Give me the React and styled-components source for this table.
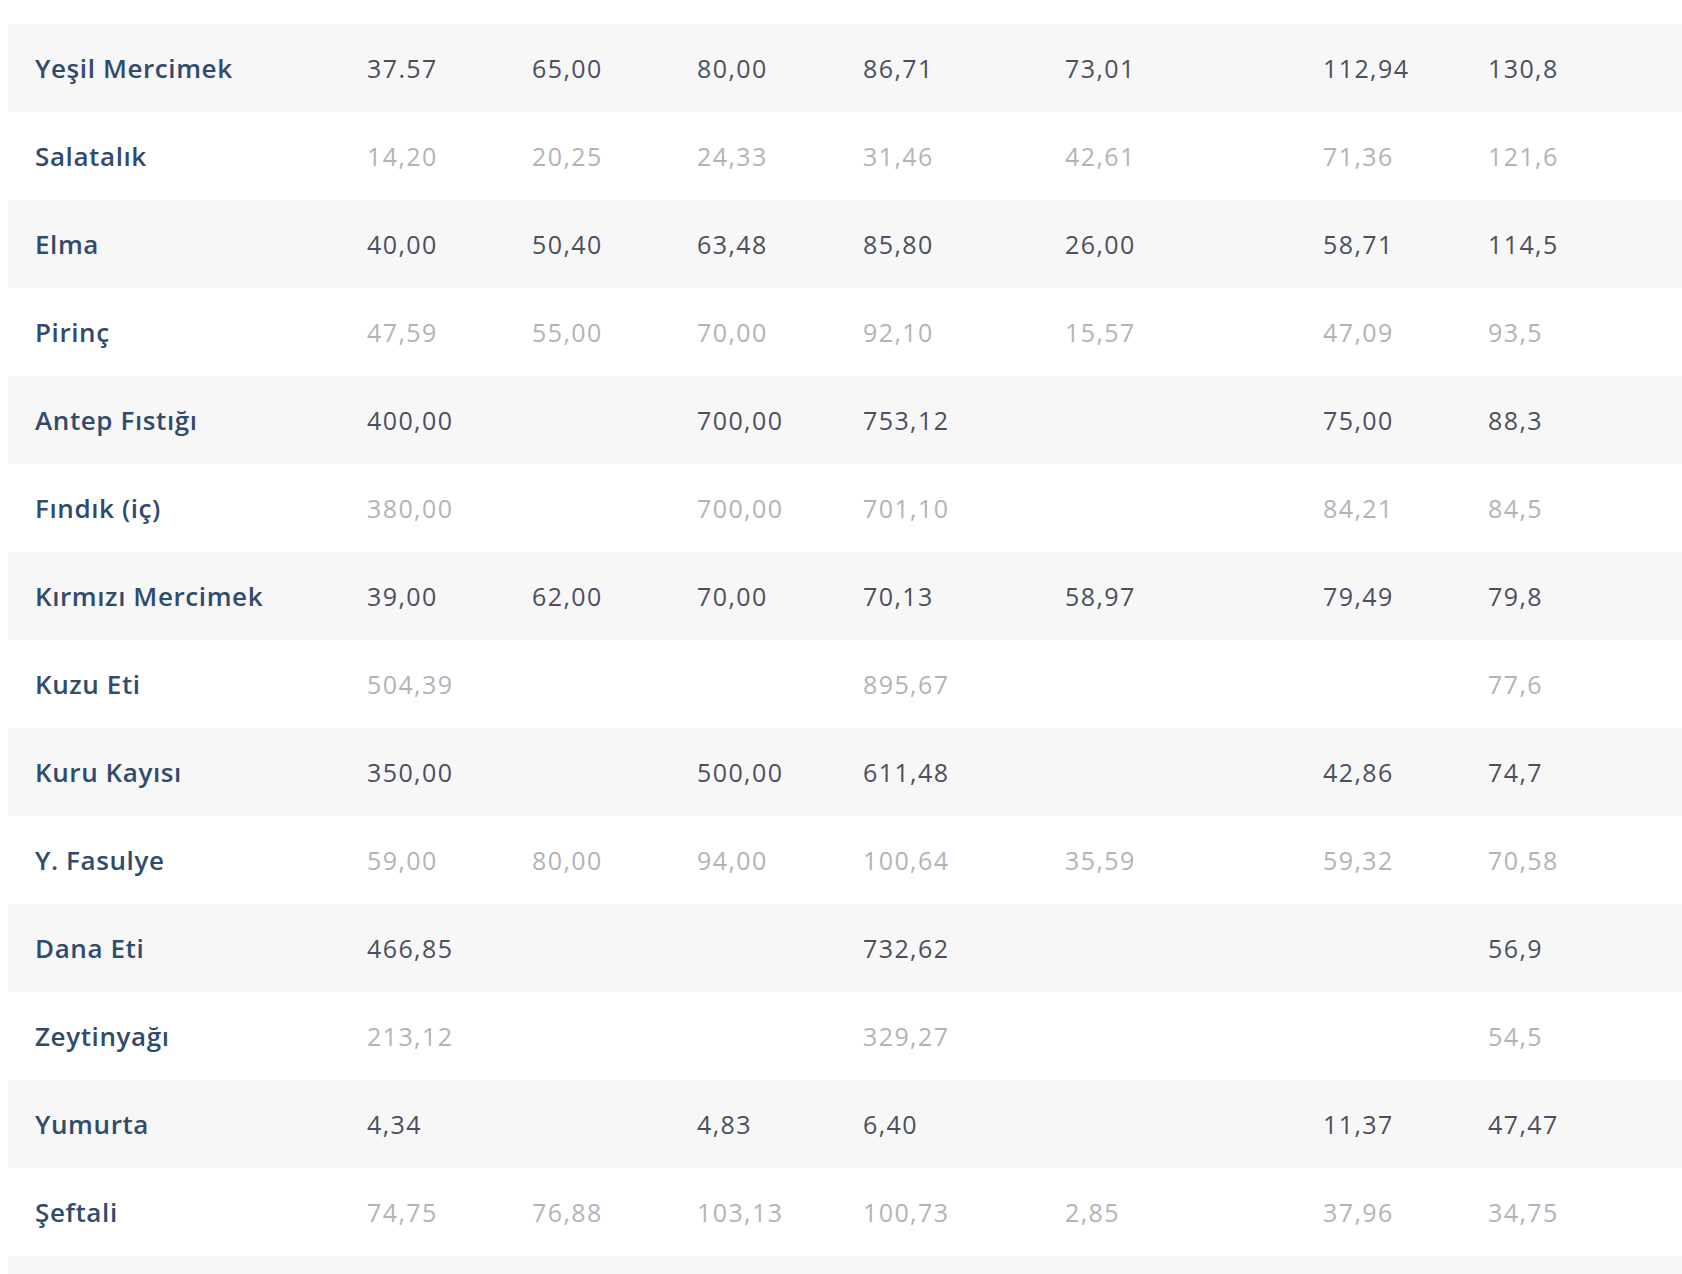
import React from "react";
import styled, { createGlobalStyle } from "styled-components";

const GlobalStyle = createGlobalStyle`
  html, body { margin: 0; padding: 0; background: #ffffff; overflow: hidden; }
  body { font-family: "Open Sans", "Lato", sans-serif; }
`;

const Page = styled.div`
  padding: 24px 0 0 8px;
  height: 1274px;
  box-sizing: border-box;
  overflow: hidden;
`;

const Table = styled.div`
  display: grid;
  grid-template-columns: 332px 165px 165px 166px 202px 258px 165px 1fr;
`;

const Row = styled.div`
  display: contents;
  & > * {
    background: ${(p) => (p.$shaded ? "#f7f7f7" : "#ffffff")};
  }
`;

const Cell = styled.div`
  height: 88px;
  display: flex;
  align-items: center;
  padding-left: 27px;
  box-sizing: border-box;
  white-space: nowrap;
`;

const NameCell = styled(Cell)`
  font-weight: 600;
  font-size: 26px;
  color: #314b6c;
  letter-spacing: 0.6px;
`;

const NumCell = styled(Cell)`
  font-weight: 400;
  font-size: 25px;
  color: ${(p) => (p.$shaded ? "#4c4f5d" : "#b2b3ba")};
  letter-spacing: 1.4px;
`;

const rows = [
  ["Yeşil Mercimek", "37.57", "65,00", "80,00", "86,71", "73,01", "112,94", "130,8"],
  ["Salatalık", "14,20", "20,25", "24,33", "31,46", "42,61", "71,36", "121,6"],
  ["Elma", "40,00", "50,40", "63,48", "85,80", "26,00", "58,71", "114,5"],
  ["Pirinç", "47,59", "55,00", "70,00", "92,10", "15,57", "47,09", "93,5"],
  ["Antep Fıstığı", "400,00", "", "700,00", "753,12", "", "75,00", "88,3"],
  ["Fındık (iç)", "380,00", "", "700,00", "701,10", "", "84,21", "84,5"],
  ["Kırmızı Mercimek", "39,00", "62,00", "70,00", "70,13", "58,97", "79,49", "79,8"],
  ["Kuzu Eti", "504,39", "", "", "895,67", "", "", "77,6"],
  ["Kuru Kayısı", "350,00", "", "500,00", "611,48", "", "42,86", "74,7"],
  ["Y. Fasulye", "59,00", "80,00", "94,00", "100,64", "35,59", "59,32", "70,58"],
  ["Dana Eti", "466,85", "", "", "732,62", "", "", "56,9"],
  ["Zeytinyağı", "213,12", "", "", "329,27", "", "", "54,5"],
  ["Yumurta", "4,34", "", "4,83", "6,40", "", "11,37", "47,47"],
  ["Şeftali", "74,75", "76,88", "103,13", "100,73", "2,85", "37,96", "34,75"],
  ["", "", "", "", "", "", "", ""],
];

export default function App() {
  return (
    <>
      <GlobalStyle />
      <Page>
        <Table>
          {rows.map((r, i) => {
            const shaded = i % 2 === 0;
            return (
              <Row key={i} $shaded={shaded}>
                <NameCell>{r[0]}</NameCell>
                {r.slice(1).map((v, j) => (
                  <NumCell key={j} $shaded={shaded}>
                    {v}
                  </NumCell>
                ))}
              </Row>
            );
          })}
        </Table>
      </Page>
    </>
  );
}
